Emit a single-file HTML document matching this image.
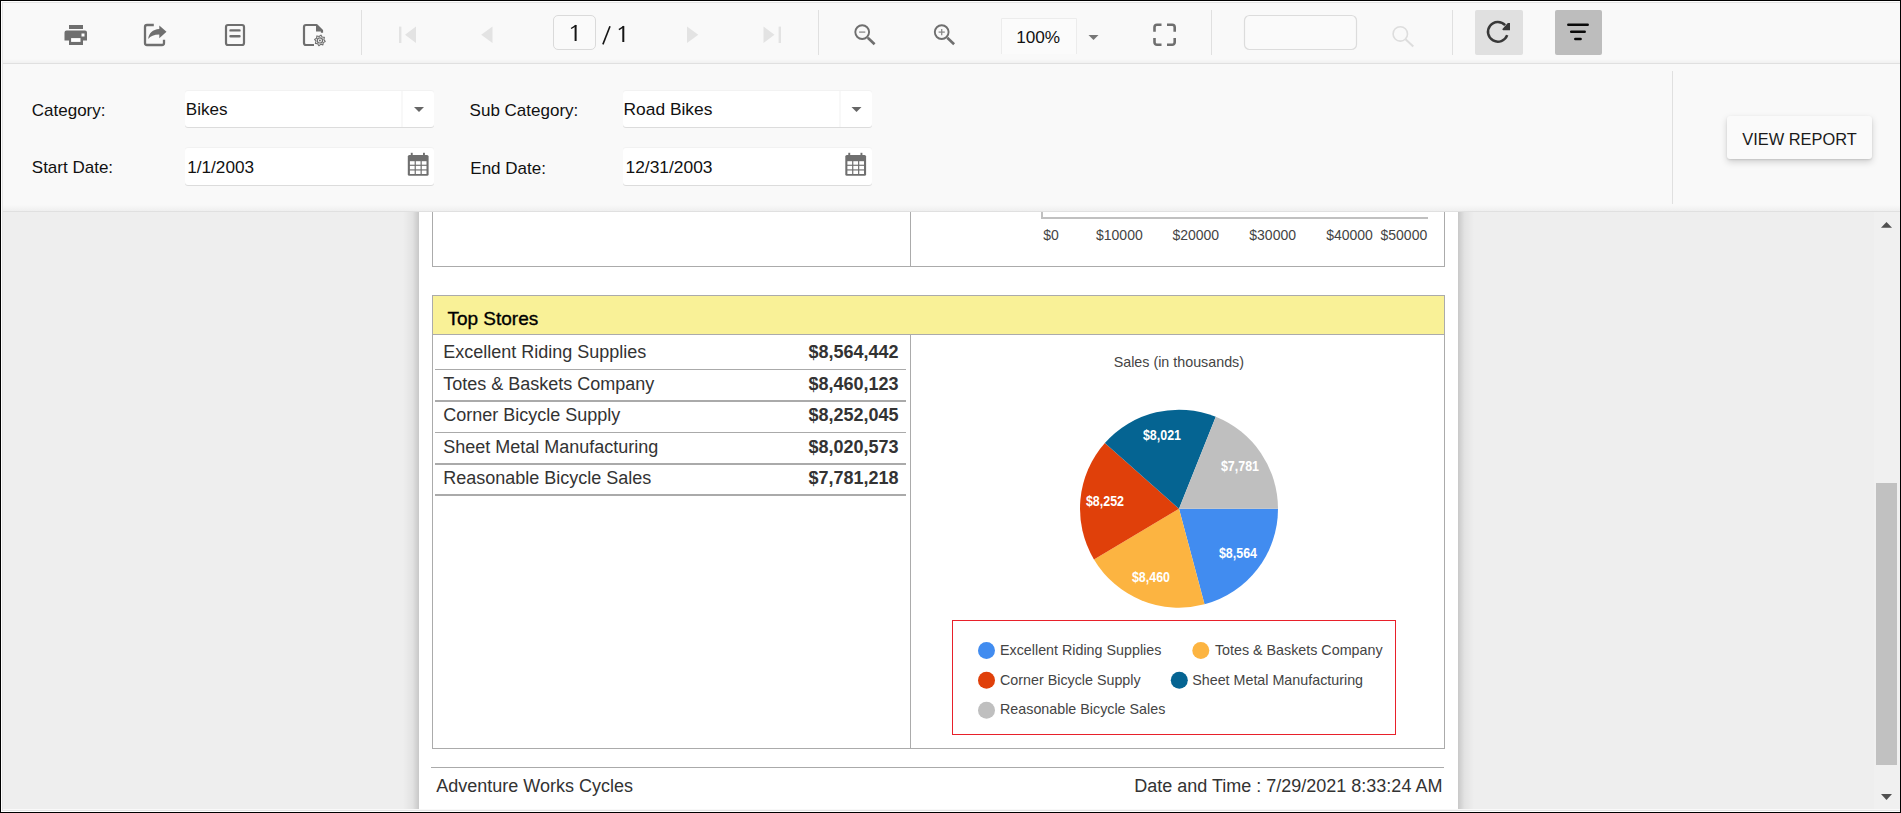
<!DOCTYPE html>
<html><head><meta charset="utf-8">
<style>
*{box-sizing:border-box;margin:0;padding:0}
html,body{width:1901px;height:813px;overflow:hidden}
body{position:relative;background:#000;font-family:"Liberation Sans",sans-serif}
.a{position:absolute}
.t{position:absolute;white-space:nowrap}
svg{position:absolute;overflow:visible}
</style></head><body>

<div class="a" style="left:1px;top:1px;width:1899px;height:811px;background:#fff;"></div>
<div class="a" style="left:2px;top:2px;width:1898px;height:809px;background:#e5e5e5;"></div>
<div class="a" style="left:3px;top:3px;width:1897px;height:807px;background:#f9f9f9;"></div>
<div class="a" style="left:3px;top:59px;width:1897px;height:4px;background:linear-gradient(#f9f9f9,#f1f1f1);"></div>
<div class="a" style="left:3px;top:63px;width:1897px;height:1px;background:#e0e0e0;"></div>
<div class="a" style="left:3px;top:205px;width:1897px;height:6px;background:linear-gradient(#f9f9f9,#efefef);"></div>
<div class="a" style="left:3px;top:211px;width:1897px;height:1px;background:#e0e0e0;"></div>
<div class="a" style="left:3px;top:212px;width:1871px;height:597px;background:#eeeeee;"></div>
<div class="a" style="left:403px;top:212px;width:16px;height:597px;background:linear-gradient(to right,rgba(0,0,0,0),rgba(0,0,0,.05) 60%,rgba(0,0,0,.16));"></div>
<div class="a" style="left:1458px;top:212px;width:16px;height:597px;background:linear-gradient(to left,rgba(0,0,0,0),rgba(0,0,0,.05) 60%,rgba(0,0,0,.16));"></div>
<div class="a" style="left:419px;top:212px;width:1039px;height:597px;background:#fff;"></div>
<div class="a" style="left:1874px;top:212px;width:26px;height:597px;background:#f0f0f0;"></div>
<div class="a" style="left:1876px;top:483px;width:21px;height:282px;background:#c1c1c1;"></div>
<svg style="left:0;top:0" width="1901" height="813"><polygon points="1881,227.7 1892,227.7 1886.5,222" fill="#505050"/><polygon points="1881,794 1892,794 1886.5,800" fill="#505050"/></svg>
<svg style="left:0;top:0" width="1901" height="813"><rect x="69" y="25" width="14" height="4" fill="#6f6f6f"/><path d="M66.5 30.5 H85 a2 2 0 0 1 2 2 V40.5 H83 V45 H69 V40.5 H64.5 V32.5 a2 2 0 0 1 2 -2 Z" fill="#6f6f6f"/><rect x="71.1" y="38.1" width="9.4" height="3.8" fill="#fff"/><rect x="81.5" y="33.5" width="3" height="3" fill="#fff"/><path d="M153.8 25 H147 a2 2 0 0 0 -2 2 V43 a2 2 0 0 0 2 2 H162 a2 2 0 0 0 2 -2 V39.8" fill="none" stroke="#6f6f6f" stroke-width="2.3"/><path d="M159.3 25.5 L166.5 31.8 L159.3 38.2 V34.5 C154 34.5 150.5 36 148.2 39 C149 33 152.5 29.5 159.3 29 Z" fill="#6f6f6f"/><rect x="226" y="25" width="18" height="20" rx="2" fill="none" stroke="#6f6f6f" stroke-width="2.2"/><path d="M230.5 30.4 H239.5 M230.5 36.3 H239.5" stroke="#6f6f6f" stroke-width="2.4" stroke-linecap="round"/><path d="M314 45 H306 a2 2 0 0 1 -2 -2 V27 a2 2 0 0 1 2 -2 H316.5 L322 30.5 V32.7" fill="none" stroke="#6f6f6f" stroke-width="2.2" stroke-linejoin="round"/><path d="M316 25 V31.5 H322 Z" fill="#6f6f6f"/><polygon points="325.20,41.45 323.23,42.62 322.90,44.89 320.68,44.32 318.85,45.70 317.68,43.73 315.41,43.40 315.98,41.18 314.60,39.35 316.57,38.18 316.90,35.91 319.12,36.48 320.95,35.10 322.12,37.07 324.39,37.40 323.82,39.62" fill="#f9f9f9" stroke="#6f6f6f" stroke-width="1.1" stroke-linejoin="round"/><circle cx="319.9" cy="40.4" r="2.6" fill="none" stroke="#6f6f6f" stroke-width="1.2"/><circle cx="319.9" cy="40.4" r="1.0" fill="#6f6f6f"/><rect x="361" y="10" width="1" height="45" fill="#e0e0e0"/><rect x="818" y="10" width="1" height="45" fill="#e0e0e0"/><rect x="1211" y="10" width="1" height="45" fill="#e0e0e0"/><rect x="1452" y="10" width="1" height="45" fill="#e0e0e0"/><rect x="399" y="26.6" width="2.4" height="16.4" fill="#e3e3e3"/><polygon points="416,26.6 416,43 405,34.8" fill="#e3e3e3"/><polygon points="492.5,26.6 492.5,43 481.2,34.8" fill="#e3e3e3"/><polygon points="687,26.6 687,43 698.3,34.8" fill="#e3e3e3"/><rect x="778.6" y="26.6" width="2.4" height="16.4" fill="#e3e3e3"/><polygon points="763.5,26.6 763.5,43 774.5,34.8" fill="#e3e3e3"/><rect x="553.5" y="15.5" width="42" height="34" rx="4.5" fill="#fafafa" stroke="#dadada" stroke-width="1"/><circle cx="862.2" cy="32.1" r="6.9" fill="none" stroke="#6f6f6f" stroke-width="1.9"/><path d="M867.8000000000001 37.7 L874.6 44.3" stroke="#6f6f6f" stroke-width="2.6"/><path d="M859.1 32.1 H865.3000000000001" stroke="#8a8a8a" stroke-width="1.3"/><circle cx="941.7" cy="32.1" r="6.9" fill="none" stroke="#6f6f6f" stroke-width="1.9"/><path d="M947.3000000000001 37.7 L954.1 44.3" stroke="#6f6f6f" stroke-width="2.6"/><path d="M938.6 32.1 H944.8000000000001" stroke="#8a8a8a" stroke-width="1.3"/><path d="M941.7 29 V35.2" stroke="#8a8a8a" stroke-width="1.3"/><rect x="1001" y="18" width="76" height="36" fill="#fbfbfb"/><path d="M1001.5 54 V18.5 H1076.5 V54" fill="none" stroke="#ececec" stroke-width="1"/><polygon points="1088.5,35 1098.5,35 1093.5,40" fill="#777"/><path d="M1154.5 31.8 V27.3 a2.5 2.5 0 0 1 2.5 -2.5 H1161.5 M1167 24.8 H1172.2 a2.5 2.5 0 0 1 2.5 2.5 V31.8 M1174.7 38 V42.2 a2.5 2.5 0 0 1 -2.5 2.5 H1167 M1161.5 44.7 H1157 a2.5 2.5 0 0 1 -2.5 -2.5 V38" fill="none" stroke="#6f6f6f" stroke-width="2.6" stroke-linecap="butt"/><rect x="1244.5" y="15.5" width="112" height="34" rx="5" fill="#fafafa" stroke="#dcdcdc" stroke-width="1.2"/><circle cx="1400.3" cy="33.9" r="7.2" fill="none" stroke="#dddddd" stroke-width="1.6"/><path d="M1405.5 39.2 L1413.3 46.6" stroke="#dddddd" stroke-width="2"/><rect x="1475" y="10" width="48" height="45" rx="2" fill="#e0e0e0"/><path d="M1507.20 35.19 A9.9 9.9 0 1 1 1505.14 25.05" fill="none" stroke="#383838" stroke-width="2.5"/><polygon points="1502.2,29.2 1507.8,23.1 1510,23.1 1510,30.3 1503.2,30.3" fill="#383838"/><rect x="1555" y="10" width="47" height="45" rx="2" fill="#bdbdbd"/><path d="M1568.3 24.7 H1587.7 M1571.2 31.8 H1584.7 M1575.3 39 H1580.6" stroke="#0a0a0a" stroke-width="2.5" stroke-linecap="round"/></svg>
<svg style="left:0;top:0" width="1901" height="813"><rect x="574.6" y="25.1" width="2.0" height="15.9" fill="#151515"/><path d="M571.1 28.5 L576.2 25.3" stroke="#151515" stroke-width="1.4"/><path d="M602.9 44.4 L610 26.3" stroke="#151515" stroke-width="1.6"/><rect x="622.3" y="26.2" width="2.0" height="15.8" fill="#151515"/><path d="M618.9 29.6 L623.9 26.4" stroke="#151515" stroke-width="1.4"/></svg>
<div class="t" style="left:1016.20px;top:28.64px;font-size:17.2px;line-height:17.2px;color:#111;font-weight:400;">100%</div>
<div class="t" style="left:31.80px;top:101.51px;font-size:17px;line-height:17px;color:#111;font-weight:400;">Category:</div>
<div class="t" style="left:31.80px;top:159.31px;font-size:17px;line-height:17px;color:#111;font-weight:400;">Start Date:</div>
<div class="t" style="left:469.60px;top:101.81px;font-size:17px;line-height:17px;color:#111;font-weight:400;">Sub Category:</div>
<div class="t" style="left:470.30px;top:159.71px;font-size:17px;line-height:17px;color:#111;font-weight:400;">End Date:</div>
<div class="a" style="left:185px;top:90.5px;width:248.5px;height:36.8px;background:#fff;border-radius:3px;box-shadow:0 1px 0 #dcdcdc,0 -1px 0 #f2f2f2"></div>
<div class="a" style="left:623px;top:90.5px;width:248.5px;height:36.8px;background:#fff;border-radius:3px;box-shadow:0 1px 0 #dcdcdc,0 -1px 0 #f2f2f2"></div>
<div class="a" style="left:185px;top:148.3px;width:248.5px;height:37.0px;background:#fff;border-radius:3px;box-shadow:0 1px 0 #dcdcdc,0 -1px 0 #f2f2f2"></div>
<div class="a" style="left:623px;top:148.3px;width:248.5px;height:37.0px;background:#fff;border-radius:3px;box-shadow:0 1px 0 #dcdcdc,0 -1px 0 #f2f2f2"></div>
<div class="a" style="left:401px;top:91px;width:2px;height:36px;background:#f8f8f8;"></div>
<div class="a" style="left:839px;top:91px;width:2px;height:36px;background:#f8f8f8;"></div>
<div class="t" style="left:185.80px;top:101.42px;font-size:17.1px;line-height:17.1px;color:#111;font-weight:400;">Bikes</div>
<div class="t" style="left:623.50px;top:101.47px;font-size:17.4px;line-height:17.4px;color:#111;font-weight:400;">Road Bikes</div>
<div class="t" style="left:187.20px;top:158.94px;font-size:17.2px;line-height:17.2px;color:#111;font-weight:400;">1/1/2003</div>
<div class="t" style="left:625.50px;top:158.67px;font-size:17.4px;line-height:17.4px;color:#111;font-weight:400;">12/31/2003</div>
<svg style="left:0;top:0" width="1901" height="813"><polygon points="414,107 424,107 419,112" fill="#666"/><polygon points="851.5,107 861.5,107 856.5,112" fill="#666"/><rect x="407.8" y="155" width="20.8" height="20.8" rx="1.6" fill="#6f6f6f"/><rect x="410.8" y="152.8" width="1.9" height="4" fill="#6f6f6f"/><rect x="423.0" y="152.8" width="1.9" height="4" fill="#6f6f6f"/><rect x="409.90" y="161.20" width="4.73" height="3.5" fill="#fff"/><rect x="415.83" y="161.20" width="4.73" height="3.5" fill="#fff"/><rect x="421.76" y="161.20" width="4.73" height="3.5" fill="#fff"/><rect x="409.90" y="165.85" width="4.73" height="3.5" fill="#fff"/><rect x="415.83" y="165.85" width="4.73" height="3.5" fill="#fff"/><rect x="421.76" y="165.85" width="4.73" height="3.5" fill="#fff"/><rect x="409.90" y="170.50" width="4.73" height="3.5" fill="#fff"/><rect x="415.83" y="170.50" width="4.73" height="3.5" fill="#fff"/><rect x="421.76" y="170.50" width="4.73" height="3.5" fill="#fff"/><rect x="845.3" y="155" width="20.8" height="20.8" rx="1.6" fill="#6f6f6f"/><rect x="848.3" y="152.8" width="1.9" height="4" fill="#6f6f6f"/><rect x="860.5" y="152.8" width="1.9" height="4" fill="#6f6f6f"/><rect x="847.40" y="161.20" width="4.73" height="3.5" fill="#fff"/><rect x="853.33" y="161.20" width="4.73" height="3.5" fill="#fff"/><rect x="859.26" y="161.20" width="4.73" height="3.5" fill="#fff"/><rect x="847.40" y="165.85" width="4.73" height="3.5" fill="#fff"/><rect x="853.33" y="165.85" width="4.73" height="3.5" fill="#fff"/><rect x="859.26" y="165.85" width="4.73" height="3.5" fill="#fff"/><rect x="847.40" y="170.50" width="4.73" height="3.5" fill="#fff"/><rect x="853.33" y="170.50" width="4.73" height="3.5" fill="#fff"/><rect x="859.26" y="170.50" width="4.73" height="3.5" fill="#fff"/><rect x="1672" y="71" width="1" height="133" fill="#e0e0e0"/></svg>
<div class="a" style="left:1727px;top:116px;width:145px;height:43px;background:#fafafa;border-radius:3px;box-shadow:0 3px 7px rgba(0,0,0,.17),0 1px 2px rgba(0,0,0,.1)"></div>
<div class="t" style="left:1742.30px;top:130.62px;font-size:16.4px;line-height:16.4px;color:#1a1a1a;font-weight:400;">VIEW REPORT</div>
<div class="a" style="left:432px;top:212px;width:1px;height:55px;background:#ababab;"></div>
<div class="a" style="left:1444px;top:212px;width:1px;height:55px;background:#ababab;"></div>
<div class="a" style="left:432px;top:266px;width:1013px;height:1px;background:#ababab;"></div>
<div class="a" style="left:910px;top:212px;width:1px;height:54px;background:#ababab;"></div>
<div class="a" style="left:1041.3px;top:212px;width:1.7000000000000455px;height:6.599999999999994px;background:#c0c0c0;"></div>
<div class="a" style="left:1041.3px;top:217px;width:386.70000000000005px;height:1.5999999999999943px;background:#c0c0c0;"></div>
<div class="t" style="left:1043.30px;top:227.95px;font-size:14px;line-height:14px;color:#444;font-weight:400;">$0</div>
<div class="t" style="left:1096.00px;top:227.95px;font-size:14px;line-height:14px;color:#444;font-weight:400;">$10000</div>
<div class="t" style="left:1172.40px;top:227.95px;font-size:14px;line-height:14px;color:#444;font-weight:400;">$20000</div>
<div class="t" style="left:1249.30px;top:227.95px;font-size:14px;line-height:14px;color:#444;font-weight:400;">$30000</div>
<div class="t" style="left:1326.20px;top:227.95px;font-size:14px;line-height:14px;color:#444;font-weight:400;">$40000</div>
<div class="t" style="left:1380.50px;top:227.95px;font-size:14px;line-height:14px;color:#444;font-weight:400;">$50000</div>
<div class="a" style="left:432px;top:295px;width:1013px;height:454px;background:#ababab;"></div>
<div class="a" style="left:433px;top:296px;width:1011px;height:452px;background:#fff;"></div>
<div class="a" style="left:433px;top:296px;width:1011px;height:38px;background:#f9f197;"></div>
<div class="a" style="left:433px;top:334px;width:1011px;height:1px;background:#ababab;"></div>
<div class="t" style="left:447.40px;top:308.92px;font-size:19px;line-height:19px;color:#000;font-weight:400;-webkit-text-stroke:0.35px #000">Top Stores</div>
<div class="t" style="left:443.20px;top:342.96px;font-size:18px;line-height:18px;color:#333;font-weight:400;">Excellent Riding Supplies</div>
<div class="t" style="right:1002.40px;top:342.96px;font-size:18px;line-height:18px;color:#333;font-weight:700;text-align:right;">$8,564,442</div>
<div class="t" style="left:443.20px;top:374.96px;font-size:18px;line-height:18px;color:#333;font-weight:400;">Totes &amp; Baskets Company</div>
<div class="t" style="right:1002.40px;top:374.96px;font-size:18px;line-height:18px;color:#333;font-weight:700;text-align:right;">$8,460,123</div>
<div class="t" style="left:443.20px;top:405.96px;font-size:18px;line-height:18px;color:#333;font-weight:400;">Corner Bicycle Supply</div>
<div class="t" style="right:1002.40px;top:405.96px;font-size:18px;line-height:18px;color:#333;font-weight:700;text-align:right;">$8,252,045</div>
<div class="t" style="left:443.20px;top:437.96px;font-size:18px;line-height:18px;color:#333;font-weight:400;">Sheet Metal Manufacturing</div>
<div class="t" style="right:1002.40px;top:437.96px;font-size:18px;line-height:18px;color:#333;font-weight:700;text-align:right;">$8,020,573</div>
<div class="t" style="left:443.20px;top:468.96px;font-size:18px;line-height:18px;color:#333;font-weight:400;">Reasonable Bicycle Sales</div>
<div class="t" style="right:1002.40px;top:468.96px;font-size:18px;line-height:18px;color:#333;font-weight:700;text-align:right;">$7,781,218</div>
<div class="a" style="left:435px;top:369px;width:471px;height:1px;background:#aaaaaa;"></div>
<div class="a" style="left:435px;top:400px;width:471px;height:2px;background:#aaaaaa;"></div>
<div class="a" style="left:435px;top:432px;width:471px;height:1px;background:#aaaaaa;"></div>
<div class="a" style="left:435px;top:463px;width:471px;height:2px;background:#aaaaaa;"></div>
<div class="a" style="left:435px;top:494px;width:471px;height:2px;background:#aaaaaa;"></div>
<div class="a" style="left:910px;top:335px;width:1px;height:413px;background:#ababab;"></div>
<div class="t" style="left:1113.70px;top:355.40px;font-size:14.3px;line-height:14.3px;color:#444;font-weight:400;">Sales (in thousands)</div>
<svg style="left:0;top:0" width="1901" height="813"><path d="M1179 508.7 L1278.00 508.70 A99 99 0 0 1 1204.53 604.35 Z" fill="#418CF0"/><path d="M1179 508.7 L1204.53 604.35 A99 99 0 0 1 1093.97 559.40 Z" fill="#FCB441"/><path d="M1179 508.7 L1093.97 559.40 A99 99 0 0 1 1104.87 443.08 Z" fill="#E0400A"/><path d="M1179 508.7 L1104.87 443.08 A99 99 0 0 1 1215.78 416.79 Z" fill="#056492"/><path d="M1179 508.7 L1215.78 416.79 A99 99 0 0 1 1278.00 508.70 Z" fill="#BFBFBF"/></svg>
<div class="t" style="left:1208px;top:545.4px;width:60px;text-align:center;font-size:14px;line-height:16px;color:#fff;font-weight:700;transform:scaleX(0.89)">$8,564</div>
<div class="t" style="left:1121px;top:569.4px;width:60px;text-align:center;font-size:14px;line-height:16px;color:#fff;font-weight:700;transform:scaleX(0.89)">$8,460</div>
<div class="t" style="left:1075px;top:493.4px;width:60px;text-align:center;font-size:14px;line-height:16px;color:#fff;font-weight:700;transform:scaleX(0.89)">$8,252</div>
<div class="t" style="left:1132px;top:427.4px;width:60px;text-align:center;font-size:14px;line-height:16px;color:#fff;font-weight:700;transform:scaleX(0.89)">$8,021</div>
<div class="t" style="left:1210px;top:458.4px;width:60px;text-align:center;font-size:14px;line-height:16px;color:#fff;font-weight:700;transform:scaleX(0.89)">$7,781</div>
<div class="a" style="left:952px;top:620px;width:444px;height:115px;border:1px solid #e8202a"></div>
<svg style="left:0;top:0" width="1901" height="813"><circle cx="986.5" cy="650.5" r="8.5" fill="#418CF0"/><circle cx="1200.8" cy="650.5" r="8.5" fill="#FCB441"/><circle cx="986.5" cy="680.3" r="8.5" fill="#E0400A"/><circle cx="1179.3" cy="680.3" r="8.5" fill="#056492"/><circle cx="986.5" cy="710.3" r="8.5" fill="#BFBFBF"/></svg>
<div class="t" style="left:1000.00px;top:643.20px;font-size:14.3px;line-height:14.3px;color:#444;font-weight:400;">Excellent Riding Supplies</div>
<div class="t" style="left:1214.90px;top:643.20px;font-size:14.3px;line-height:14.3px;color:#444;font-weight:400;">Totes &amp; Baskets Company</div>
<div class="t" style="left:1000.00px;top:672.90px;font-size:14.3px;line-height:14.3px;color:#444;font-weight:400;">Corner Bicycle Supply</div>
<div class="t" style="left:1192.20px;top:672.90px;font-size:14.3px;line-height:14.3px;color:#444;font-weight:400;">Sheet Metal Manufacturing</div>
<div class="t" style="left:1000.00px;top:702.40px;font-size:14.3px;line-height:14.3px;color:#444;font-weight:400;">Reasonable Bicycle Sales</div>
<div class="a" style="left:431px;top:767px;width:1013px;height:1px;background:#aaaaaa;"></div>
<div class="t" style="left:436.20px;top:776.76px;font-size:18px;line-height:18px;color:#333;font-weight:400;">Adventure Works Cycles</div>
<div class="t" style="right:458.60px;top:776.76px;font-size:18px;line-height:18px;color:#333;font-weight:400;text-align:right;">Date and Time : 7/29/2021 8:33:24 AM</div>
</body></html>
